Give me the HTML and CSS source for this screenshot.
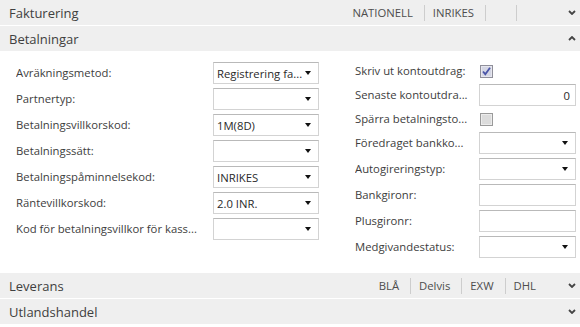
FILE: index.html
```html
<!DOCTYPE html>
<html lang="sv">
<head>
<meta charset="utf-8">
<title>Betalningar</title>
<link rel="stylesheet" href="styles.css">
</head>
<body>
<div class="page">
  <div class="section-header">
    <span class="section-title">Fakturering</span>
    <div class="facts">
      <span class="fact">NATIONELL</span>
      <span class="fact">INRIKES</span>
      <span class="fact fact-empty"></span>
      <span class="fact fact-empty"></span>
    </div>
    <svg class="chevron" width="8" height="5" viewBox="0 0 8 5"><path d="M1 1 L4 4 L7 1" fill="none" stroke="#444" stroke-width="1.8"/></svg>
  </div>

  <div class="section-header">
    <span class="section-title">Betalningar</span>
    <svg class="chevron" width="8" height="5" viewBox="0 0 8 5"><path d="M1 4 L4 1 L7 4" fill="none" stroke="#444" stroke-width="1.8"/></svg>
  </div>

  <div class="section-body">
    <div class="col col-left">
      <label class="lbl">Avräkningsmetod:</label>
      <div class="field select"><span class="val">Registrering fa...</span><span class="arrow"></span></div>

      <label class="lbl">Partnertyp:</label>
      <div class="field select"><span class="val"></span><span class="arrow"></span></div>

      <label class="lbl">Betalningsvillkorskod:</label>
      <div class="field select"><span class="val">1M(8D)</span><span class="arrow"></span></div>

      <label class="lbl">Betalningssätt:</label>
      <div class="field select"><span class="val"></span><span class="arrow"></span></div>

      <label class="lbl">Betalningspåminnelsekod:</label>
      <div class="field select"><span class="val">INRIKES</span><span class="arrow"></span></div>

      <label class="lbl">Räntevillkorskod:</label>
      <div class="field select"><span class="val">2.0 INR.</span><span class="arrow"></span></div>

      <label class="lbl">Kod för betalningsvillkor för kass...</label>
      <div class="field select"><span class="val"></span><span class="arrow"></span></div>
    </div>

    <div class="col col-right">
      <label class="lbl row-cb">Skriv ut kontoutdrag:</label>
      <div class="cb-wrap">
        <svg class="cb" width="13" height="13" viewBox="0 0 13 13">
          <rect x="0.5" y="0.5" width="12" height="12" fill="#e6e6ee" stroke="#8f8f9a"/>
          <rect x="2" y="2" width="9" height="9" fill="#d4d6e4"/>
          <path d="M3 6.5 L5.3 9.2 L10 2.8" fill="none" stroke="#4a55a8" stroke-width="1.8"/>
        </svg>
      </div>

      <label class="lbl">Senaste kontoutdra...</label>
      <div class="field num"><span class="val">0</span></div>

      <label class="lbl row-cb">Spärra betalningsto...</label>
      <div class="cb-wrap">
        <svg class="cb" width="13" height="13" viewBox="0 0 13 13">
          <rect x="0.5" y="0.5" width="12" height="12" fill="#ececec" stroke="#9a9a9a"/>
          <rect x="2" y="2" width="9" height="9" fill="#dcdcdc"/>
        </svg>
      </div>

      <label class="lbl">Föredraget bankko...</label>
      <div class="field select"><span class="val"></span><span class="arrow"></span></div>

      <label class="lbl">Autogireringstyp:</label>
      <div class="field select"><span class="val"></span><span class="arrow"></span></div>

      <label class="lbl">Bankgironr:</label>
      <div class="field"><span class="val"></span></div>

      <label class="lbl">Plusgironr:</label>
      <div class="field"><span class="val"></span></div>

      <label class="lbl">Medgivandestatus:</label>
      <div class="field select"><span class="val"></span><span class="arrow"></span></div>
    </div>
  </div>

  <div class="section-header">
    <span class="section-title">Leverans</span>
    <div class="facts">
      <span class="fact">BLÅ</span>
      <span class="fact">Delvis</span>
      <span class="fact">EXW</span>
      <span class="fact">DHL</span>
    </div>
    <svg class="chevron" width="8" height="5" viewBox="0 0 8 5"><path d="M1 1 L4 4 L7 1" fill="none" stroke="#444" stroke-width="1.8"/></svg>
  </div>

  <div class="section-header">
    <span class="section-title">Utlandshandel</span>
    <svg class="chevron" width="8" height="5" viewBox="0 0 8 5"><path d="M1 1 L4 4 L7 1" fill="none" stroke="#444" stroke-width="1.8"/></svg>
  </div>
</div>
</body>
</html>
```

FILE: styles.css
```css
html, body {
  margin: 0;
  padding: 0;
  background: #ffffff;
}

.page {
  width: 580px;
  font-family: "Open Sans", "Noto Sans", sans-serif;
  color: #3d3d3d;
}

.section-header {
  display: flex;
  align-items: center;
  height: 25px;
  margin-bottom: 1px;
  background: #efefef;
  padding-left: 9px;
}

.section-title {
  font-size: 13px;
  color: #404040;
  flex: 1;
  white-space: nowrap;
}

.facts {
  display: flex;
  align-items: center;
  height: 25px;
}

.fact {
  font-size: 11.3px;
  color: #4d4d4d;
  padding: 0 11px 0 8px;
  line-height: 16px;
  border-left: 1px solid #cdcdcd;
  white-space: nowrap;
}

.fact:first-child {
  border-left: none;
}

.fact-empty {
  width: 31px;
  height: 16px;
  padding: 0;
  box-sizing: border-box;
}

.chevron {
  margin-left: 21px;
  margin-right: 4px;
  flex: none;
}

.section-body {
  display: flex;
  padding: 10px 4px 15px 16px;
}

.col {
  display: grid;
  row-gap: 4px;
  align-items: center;
}

.col-left {
  grid-template-columns: 197px 106px;
  grid-auto-rows: 22px;
}

.col-right {
  margin-left: 36px;
  grid-template-columns: 124px 97px;
}

.lbl {
  font-size: 11.3px;
  color: #3d3d3d;
  white-space: nowrap;
  overflow: hidden;
  line-height: 22px;
}

.lbl.row-cb {
  line-height: 18px;
}

.cb-wrap {
  height: 18px;
  display: flex;
  align-items: center;
  padding-left: 1px;
}

.cb {
  display: block;
}

.field {
  height: 22px;
  box-sizing: border-box;
  border: 1px solid #d3d3d3;
  border-top-color: #b9b9b9;
  background: #ffffff;
  display: flex;
  align-items: center;
  padding: 0 5px 0 3px;
}

.val {
  flex: 1;
  font-size: 11.3px;
  color: #2a2a2a;
  white-space: nowrap;
  overflow: hidden;
}

.num .val {
  text-align: right;
}

.arrow {
  width: 0;
  height: 0;
  border-left: 3.5px solid transparent;
  border-right: 3.5px solid transparent;
  border-top: 4px solid #111111;
  margin-right: 2px;
}
```
